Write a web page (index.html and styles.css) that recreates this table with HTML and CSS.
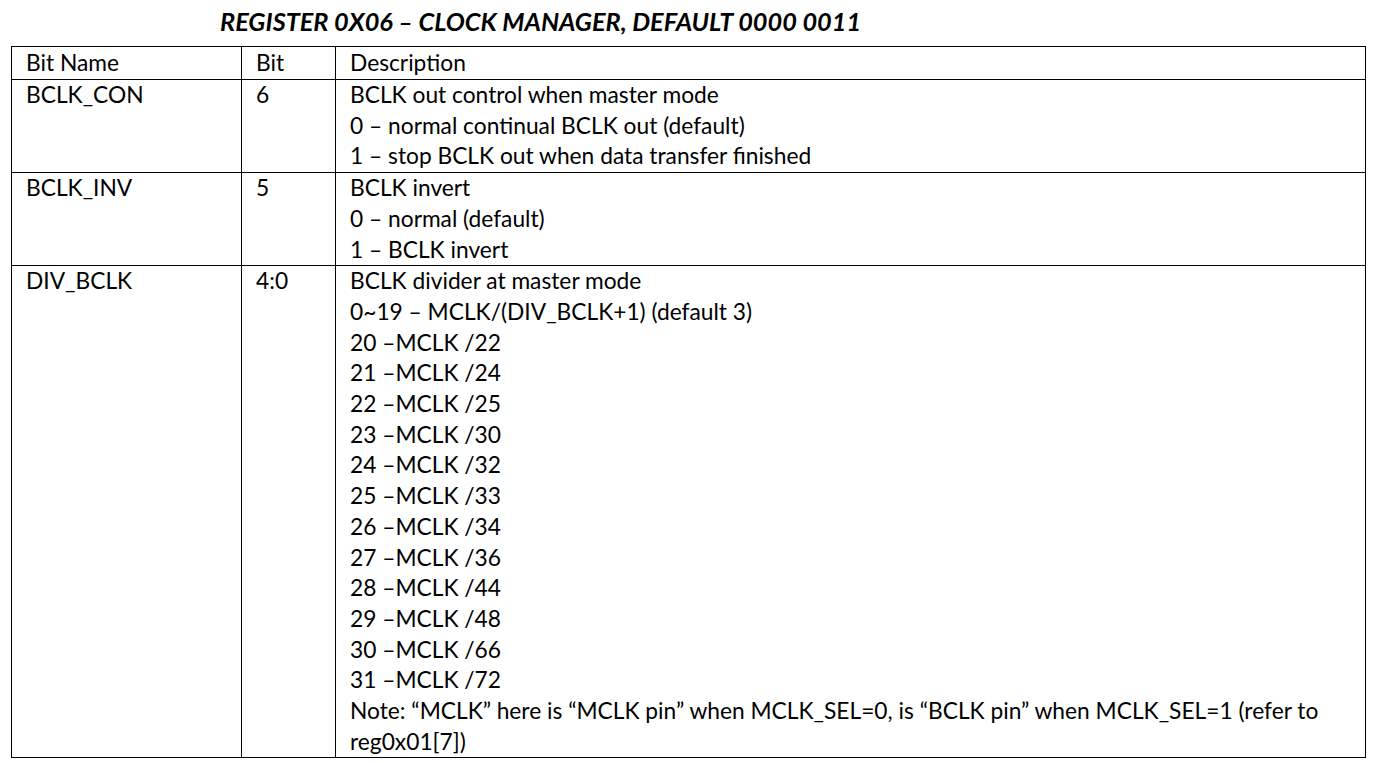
FILE: index.html
```html
<!DOCTYPE html>
<html>
<head>
<meta charset="utf-8">
<link rel="stylesheet" href="styles.css">
</head>
<body>
<div class="page">
  <h1 class="title">REGISTER 0X06 – CLOCK MANAGER, DEFAULT 0000 0011</h1>
  <table class="reg">
    <colgroup>
      <col class="c-name">
      <col class="c-bit">
      <col class="c-desc">
    </colgroup>
    <tr class="head">
      <td>Bit Name</td>
      <td>Bit</td>
      <td>Description</td>
    </tr>
    <tr>
      <td>BCLK_CON</td>
      <td>6</td>
      <td>
        <div class="ln">BCLK out control when master mode</div>
        <div class="ln">0 – normal continual BCLK out (default)</div>
        <div class="ln">1 – stop BCLK out when data transfer finished</div>
      </td>
    </tr>
    <tr>
      <td>BCLK_INV</td>
      <td>5</td>
      <td>
        <div class="ln">BCLK invert</div>
        <div class="ln">0 – normal (default)</div>
        <div class="ln">1 – BCLK invert</div>
      </td>
    </tr>
    <tr>
      <td>DIV_BCLK</td>
      <td>4:0</td>
      <td>
        <div class="ln">BCLK divider at master mode</div>
        <div class="ln">0~19 – MCLK/(DIV_BCLK+1) (default 3)</div>
        <div class="ln">20 –MCLK /22</div>
        <div class="ln">21 –MCLK /24</div>
        <div class="ln">22 –MCLK /25</div>
        <div class="ln">23 –MCLK /30</div>
        <div class="ln">24 –MCLK /32</div>
        <div class="ln">25 –MCLK /33</div>
        <div class="ln">26 –MCLK /34</div>
        <div class="ln">27 –MCLK /36</div>
        <div class="ln">28 –MCLK /44</div>
        <div class="ln">29 –MCLK /48</div>
        <div class="ln">30 –MCLK /66</div>
        <div class="ln">31 –MCLK /72</div>
        <div class="ln">Note: “MCLK” here is “MCLK pin” when MCLK_SEL=0, is “BCLK pin” when MCLK_SEL=1 (refer to</div>
        <div class="ln">reg0x01[7])</div>
      </td>
    </tr>
  </table>
</div>
</body>
</html>
```
FILE: styles.css
```css
html, body {
  margin: 0;
  padding: 0;
  background: #ffffff;
}

.page {
  padding: 0 0 0 11px;
  font-family: Lato, "Open Sans", sans-serif;
  color: #000;
}

.title {
  margin: 0;
  padding: 0 0 0 209px;
  height: 46px;
  line-height: 42px;
  font-size: 25.3px;
  font-weight: bold;
  font-style: italic;
  white-space: nowrap;
}

.reg {
  border-collapse: collapse;
  width: 1355px;
  table-layout: fixed;
  font-size: 22.75px;
}

.c-name { width: 230px; }
.c-bit { width: 94px; }

.reg td {
  border: 1px solid #000;
  padding: 0 14px;
  vertical-align: top;
  line-height: 30.7px;
  white-space: nowrap;
}

.reg .head td {
  padding-top: 1px;
  padding-bottom: 0.3px;
}

.ln {
  white-space: nowrap;
}
```
